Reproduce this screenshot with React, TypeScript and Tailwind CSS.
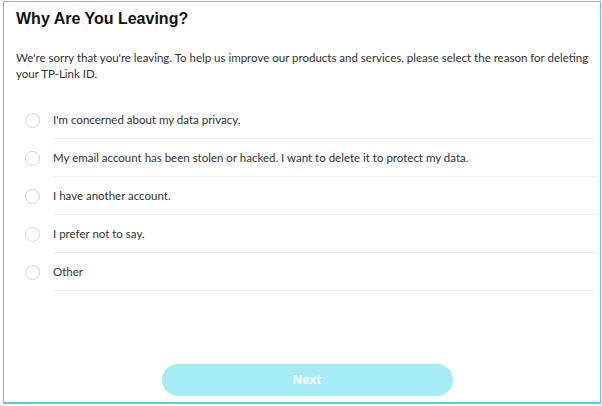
import React, { useState } from "react";

const reasons = [
  "I'm concerned about my data privacy.",
  "My email account has been stolen or hacked. I want to delete it to protect my data.",
  "I have another account.",
  "I prefer not to say.",
  "Other",
];

export default function App() {
  const [picked, setPicked] = useState<number | null>(null);

  return (
    <div className="w-[602px] h-[406px] bg-white pl-[3px] pt-[1px]" style={{ fontFamily: "Lato, 'Noto Sans', sans-serif" }}>
      <div className="w-[598px] h-[403px] border border-[#5ac6f3] border-b-2 flex flex-col">
        <h1 className="pl-[12px] pt-[6px] text-[16px] leading-[22px] font-bold text-[#111]" style={{ fontFamily: "'Liberation Sans', Arial, sans-serif" }}>
          Why Are You Leaving?
        </h1>

        <p className="mt-[20px] pl-[12px] pr-[2px] text-[11.5px] leading-[16px] text-[#333]">
          We're sorry that you're leaving. To help us improve our products and services, please select the reason for deleting your TP-Link ID.
        </p>

        <div className="mt-[19px] flex flex-col">
          {reasons.map((r, i) => (
            <label key={r} className="flex items-stretch cursor-pointer" onClick={() => setPicked(i)}>
              <div className="w-[49px] flex items-center justify-center pl-[7px]">
                <span
                  className={`w-[15px] h-[15px] rounded-full border ${
                    picked === i ? "border-[#4acbd6] border-[4px]" : "border-[#d4d4d4]"
                  }`}
                />
              </div>
              <div className="flex-1 mr-[3px] h-[38px] flex items-center border-b border-[#eeeeee] text-[11.5px] text-[#333]">
                {r}
              </div>
            </label>
          ))}
        </div>

        <div className="mt-auto mb-[6px] flex justify-center">
          <button
            className="w-[291px] h-[32px] rounded-full bg-[#a6ecf5] text-white text-[12px] font-bold ml-[10px]"
            style={{ fontFamily: "'Open Sans', sans-serif" }}
          >
            Next
          </button>
        </div>
      </div>
    </div>
  );
}
